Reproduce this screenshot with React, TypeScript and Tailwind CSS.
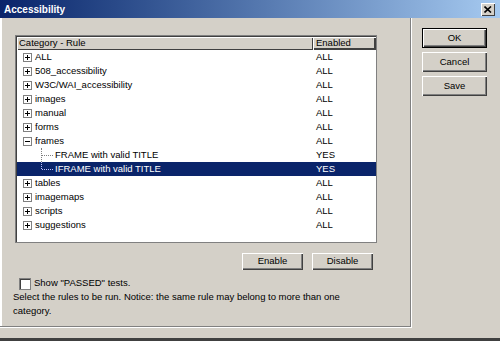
import React from "react";

const rows: { label: string; value: string; kind: "plus" | "minus" | "child"; last?: boolean; selected?: boolean }[] = [
  { label: "ALL", value: "ALL", kind: "plus" },
  { label: "508_accessibility", value: "ALL", kind: "plus" },
  { label: "W3C/WAI_accessibility", value: "ALL", kind: "plus" },
  { label: "images", value: "ALL", kind: "plus" },
  { label: "manual", value: "ALL", kind: "plus" },
  { label: "forms", value: "ALL", kind: "plus" },
  { label: "frames", value: "ALL", kind: "minus" },
  { label: "FRAME with valid TITLE", value: "YES", kind: "child" },
  { label: "IFRAME with valid TITLE", value: "YES", kind: "child", last: true, selected: true },
  { label: "tables", value: "ALL", kind: "plus" },
  { label: "imagemaps", value: "ALL", kind: "plus" },
  { label: "scripts", value: "ALL", kind: "plus" },
  { label: "suggestions", value: "ALL", kind: "plus" },
];

function Box({ minus }: { minus?: boolean }) {
  return (
    <svg width="9" height="9" viewBox="0 0 9 9" className="shrink-0">
      <rect x="0.5" y="0.5" width="8" height="8" fill="#fff" stroke="#808080" />
      <line x1="2" y1="4.5" x2="7" y2="4.5" stroke="#000" />
      {!minus && <line x1="4.5" y1="2" x2="4.5" y2="7" stroke="#000" />}
    </svg>
  );
}

const bevel =
  "flex-1 flex items-center justify-center bg-[#d4d0c8] shadow-[inset_1px_1px_0_#fff,inset_-1px_-1px_0_#404040,inset_-2px_-2px_0_#808080]";

export default function App() {
  return (
    <div
      className="w-[500px] h-[341px] bg-[#d4d0c8] flex flex-col overflow-hidden text-[9.5px] text-black"
      style={{ fontFamily: '"Liberation Sans", Arial, sans-serif' }}
    >
      {/* title bar */}
      <div className="h-[18px] shrink-0 flex items-center justify-between bg-gradient-to-r from-[#0a246a] to-[#a6caf0] pl-[4px] pr-[5px]">
        <span className="text-white font-bold text-[10px]">Accessibility</span>
        <div className="w-[14px] h-[13px] bg-[#d4d0c8] flex items-center justify-center shadow-[inset_1px_1px_0_#fff,inset_-1px_-1px_0_#404040]">
          <svg width="8" height="7" viewBox="0 0 8 7">
            <path d="M0.5 0.5 L7 6.5 M7 0.5 L0.5 6.5" stroke="#000" strokeWidth="1.6" />
          </svg>
        </div>
      </div>

      {/* body */}
      <div className="flex-1 flex border-b-[3px] border-[#404040]">
        {/* left frame */}
        <div className="w-[412px] h-[310px] flex flex-col pl-[13px] pt-[17px] shadow-[inset_-1px_-1px_0_#fff,inset_-2px_-2px_0_#808080,inset_2px_0_0_#fff]">
          {/* list */}
          <div className="ml-[2px] w-[362px] h-[208px] bg-white border border-[#808080] shadow-[inset_1px_1px_0_#404040] flex flex-col">
            <div className="h-[13px] ml-px mt-px flex shrink-0">
              <div className="w-[296px] flex items-center pl-[2px] bg-[#d4d0c8] shadow-[inset_1px_1px_0_#fff,inset_-1px_-1px_0_#404040]">
                Category - Rule
              </div>
              <div className="w-[63px] flex items-center pl-[3px] bg-[#d4d0c8] shadow-[inset_1px_1px_0_#fff,inset_-2px_-2px_0_#404040]">
                Enabled
              </div>
            </div>
            <div className="flex flex-col ml-px">
              {rows.map((r, i) => (
                <div
                  key={i}
                  className={
                    "h-[14px] flex items-center w-[359px] " +
                    (r.selected ? "bg-[#0a246a] text-white" : "")
                  }
                >
                  <div className="w-[296px] flex items-center h-full">
                    {r.kind === "child" ? (
                      <>
                        <div className="relative w-[38px] h-full shrink-0">
                          <div
                            className={
                              "absolute left-[24px] top-0 border-l border-dotted " +
                              (r.selected ? "border-[#c0c0ff]" : "border-[#808080]") +
                              (r.last ? " h-[7px]" : " h-[14px]")
                            }
                          />
                          <div
                            className={
                              "absolute left-[25px] top-[7px] w-[11px] border-t border-dotted " +
                              (r.selected ? "border-[#c0c0ff]" : "border-[#808080]")
                            }
                          />
                        </div>
                        <span>{r.label}</span>
                      </>
                    ) : (
                      <>
                        <div className="w-[18px] pl-[6px] flex items-center shrink-0">
                          <Box minus={r.kind === "minus"} />
                        </div>
                        <span>{r.label}</span>
                      </>
                    )}
                  </div>
                  <div className="pl-[3px]">{r.value}</div>
                </div>
              ))}
            </div>
          </div>

          {/* enable / disable */}
          <div className="w-[364px] flex justify-end gap-[9px] mt-[10px] pr-[4px]">
            <div className="w-[61px] h-[17px] flex">
              <div className={bevel}>Enable</div>
            </div>
            <div className="w-[61px] h-[17px] flex">
              <div className={bevel}>Disable</div>
            </div>
          </div>

          {/* checkbox */}
          <div className="flex items-center mt-[7px] ml-[6px] h-[13px]">
            <div className="w-[12px] h-[12px] bg-white border border-[#808080] shadow-[inset_1px_1px_0_#404040] mr-[3px]" />
            <span>Show "PASSED" tests.</span>
          </div>
          <div className="leading-[14px] w-[340px]">
            Select the rules to be run. Notice: the same rule may belong to more than one category.
          </div>
        </div>

        {/* right buttons */}
        <div className="flex flex-col gap-[4px] pl-[10px] pt-[10px]">
          <div className="w-[65px] h-[20px] flex">
            <div className="flex-1 flex border border-black">
              <div className={bevel}>OK</div>
            </div>
          </div>
          <div className="w-[65px] h-[20px] flex">
            <div className={bevel}>Cancel</div>
          </div>
          <div className="w-[65px] h-[20px] flex">
            <div className={bevel}>Save</div>
          </div>
        </div>
      </div>
    </div>
  );
}
